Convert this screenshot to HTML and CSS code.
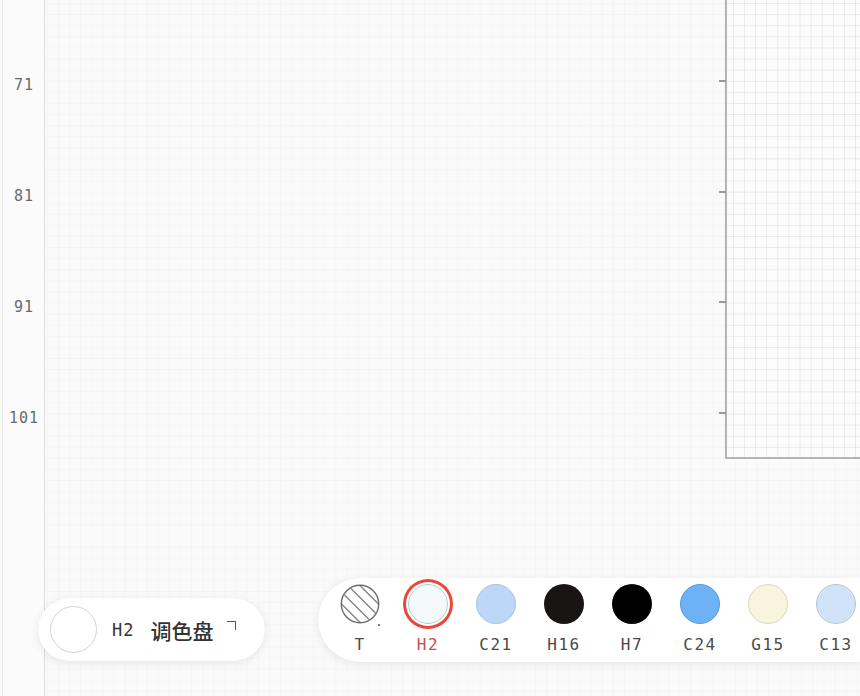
FILE: index.html
```html
<!DOCTYPE html>
<html lang="zh">
<head>
<meta charset="utf-8">
<link rel="stylesheet" href="styles.css">
</head>
<body>
<div class="app">
  <aside class="ruler">
    <span class="mark">71</span>
    <span class="mark">81</span>
    <span class="mark">91</span>
    <span class="mark">101</span>
  </aside>
  <main class="canvas">
    <div class="frame">
      <div class="ticks">
        <i class="tick"></i><i class="tick"></i><i class="tick"></i><i class="tick"></i>
      </div>
    </div>
  </main>
</div>

<div class="current">
  <span class="current-dot"></span>
  <span class="current-code">H2</span>
  <span class="current-name">调色盘</span>
  <span class="corner"></span>
</div>

<div class="palette">
  <div class="swatch">
    <span class="dot dot-none">
      <svg viewBox="0 0 40 40" width="40" height="40">
        <defs><clipPath id="c"><circle cx="20" cy="20" r="18"/></clipPath></defs>
        <g clip-path="url(#c)" stroke="#858585" stroke-width="1.4">
          <line x1="-13.6" y1="-20" x2="66.4" y2="60"/>
          <line x1="-26.4" y1="-20" x2="53.6" y2="60"/>
          <line x1="-1.6" y1="-20" x2="78.4" y2="60"/>
          <line x1="-38.4" y1="-20" x2="41.6" y2="60"/>
        </g>
        <circle cx="20" cy="20" r="18.7" fill="none" stroke="#6a6a6a" stroke-width="1.4"/>
      </svg>
      <i class="none-mark"></i>
    </span>
    <span class="label">T</span>
  </div>
  <div class="swatch selected">
    <span class="dot dot-h2"></span>
    <span class="label">H2</span>
  </div>
  <div class="swatch">
    <span class="dot dot-c21"></span>
    <span class="label">C21</span>
  </div>
  <div class="swatch">
    <span class="dot dot-h16"></span>
    <span class="label">H16</span>
  </div>
  <div class="swatch">
    <span class="dot dot-h7"></span>
    <span class="label">H7</span>
  </div>
  <div class="swatch">
    <span class="dot dot-c24"></span>
    <span class="label">C24</span>
  </div>
  <div class="swatch">
    <span class="dot dot-g15"></span>
    <span class="label">G15</span>
  </div>
  <div class="swatch">
    <span class="dot dot-c13"></span>
    <span class="label">C13</span>
  </div>
</div>
</body>
</html>
```
FILE: styles.css
```css
* { box-sizing: border-box; }
html, body {
  margin: 0;
  padding: 0;
  width: 860px;
  height: 696px;
  overflow: hidden;
  background: #fafafa;
  font-family: "DejaVu Sans Mono", "Liberation Mono", "Noto Sans CJK SC", monospace;
}
.app {
  display: flex;
  width: 860px;
  height: 696px;
  overflow: hidden;
}
.ruler {
  width: 43px;
  margin-left: 2px;
  flex: none;
  background: #fbfbfb;
  border-left: 1px solid #e6e6e6;
  border-right: 1px solid #dcdcdc;
  display: flex;
  flex-direction: column;
  align-items: center;
  padding-top: 75px;
  gap: 91px;
}
.mark {
  height: 20px;
  line-height: 20px;
  font-size: 15px;
  letter-spacing: 1px;
  color: #6a6a6a;
  padding-left: 1px;
}
.canvas {
  flex: 1;
  position: relative;
  overflow: hidden;
  background-color: #fafafa;
  background-image:
    linear-gradient(to right, rgba(0,0,0,0.02) 1px, transparent 1px),
    linear-gradient(to bottom, rgba(0,0,0,0.02) 1px, transparent 1px);
  background-size: 11.1px 11.1px;
  background-position: 2px 3px;
}
.frame {
  position: absolute;
  left: 680px;
  top: -10px;
  right: -10px;
  height: 469px;
  border-left: 2px solid #b4b4b4;
  border-bottom: 2px solid #b4b4b4;
  background-color: #fcfcfc;
  background-image:
    linear-gradient(to right, rgba(0,0,0,0.07) 1px, transparent 1px),
    linear-gradient(to bottom, rgba(0,0,0,0.07) 1px, transparent 1px);
  background-size: 11.1px 11.1px;
  background-position: 6px 2px;
}
.ticks {
  position: absolute;
  left: -8px;
  top: 90px;
  display: flex;
  flex-direction: column;
  gap: 108.5px;
}
.tick {
  display: block;
  width: 7px;
  height: 2px;
  background: #9a9a9a;
}

.current {
  position: absolute;
  left: 38px;
  top: 598px;
  width: 227px;
  height: 63px;
  border-radius: 32px;
  background: #fff;
  box-shadow: 0 2px 10px rgba(0,0,0,0.08), 0 0 1px rgba(0,0,0,0.06);
  display: flex;
  align-items: center;
  padding-left: 12px;
}
.current-dot {
  width: 47px;
  height: 47px;
  border-radius: 50%;
  border: 1.5px solid #d4d4d4;
  background: #fff;
  flex: none;
}
.current-code {
  margin-left: 15px;
  font-size: 17px;
  letter-spacing: 1px;
  color: #333;
}
.current-name {
  margin-left: 16px;
  font-family: "Noto Sans CJK SC", sans-serif;
  font-size: 21px;
  font-weight: 500;
  color: #333;
}
.corner {
  margin-left: 14px;
  margin-top: -8px;
  width: 9px;
  height: 9px;
  border-top: 1.5px solid #555;
  border-right: 1.5px solid #555;
}

.palette {
  position: absolute;
  left: 318px;
  top: 578px;
  right: 0;
  height: 84px;
  border-radius: 42px 0 0 42px;
  background: #fff;
  box-shadow: 0 2px 10px rgba(0,0,0,0.08), 0 0 1px rgba(0,0,0,0.06);
  display: flex;
  overflow: hidden;
  padding: 6px 0 0 8px;
}
.swatch {
  width: 68px;
  flex: none;
  display: flex;
  flex-direction: column;
  align-items: center;
}
.dot {
  position: relative;
  width: 40px;
  height: 40px;
  border-radius: 50%;
  display: block;
}
.dot-none svg { display: block; }
.none-mark {
  position: absolute;
  right: 0px;
  bottom: -2px;
  width: 2px;
  height: 2px;
  background: #777;
}
.dot-h2 {
  background: #f4f9f9;
  border: 1px solid #b9d0cf;
  box-shadow: 0 0 0 2px #fff, 0 0 0 5px #e9473c;
}
.dot-c21 { background: #bcd7f8; border: 1px solid #a8c2e0; }
.dot-h16 { background: #1a1515; }
.dot-h7 { background: #000; }
.dot-c24 { background: #6db2f6; border: 1px solid #5a9ad8; }
.dot-g15 { background: #f8f4dd; border: 1px solid #ddd8bf; }
.dot-c13 { background: #d0e3f8; border: 1px solid #b4c6da; }
.label {
  margin-top: 11px;
  font-size: 16px;
  line-height: 20px;
  letter-spacing: 1.5px;
  color: #4a4a4a;
}
.selected .label { color: #c94a52; }
```
